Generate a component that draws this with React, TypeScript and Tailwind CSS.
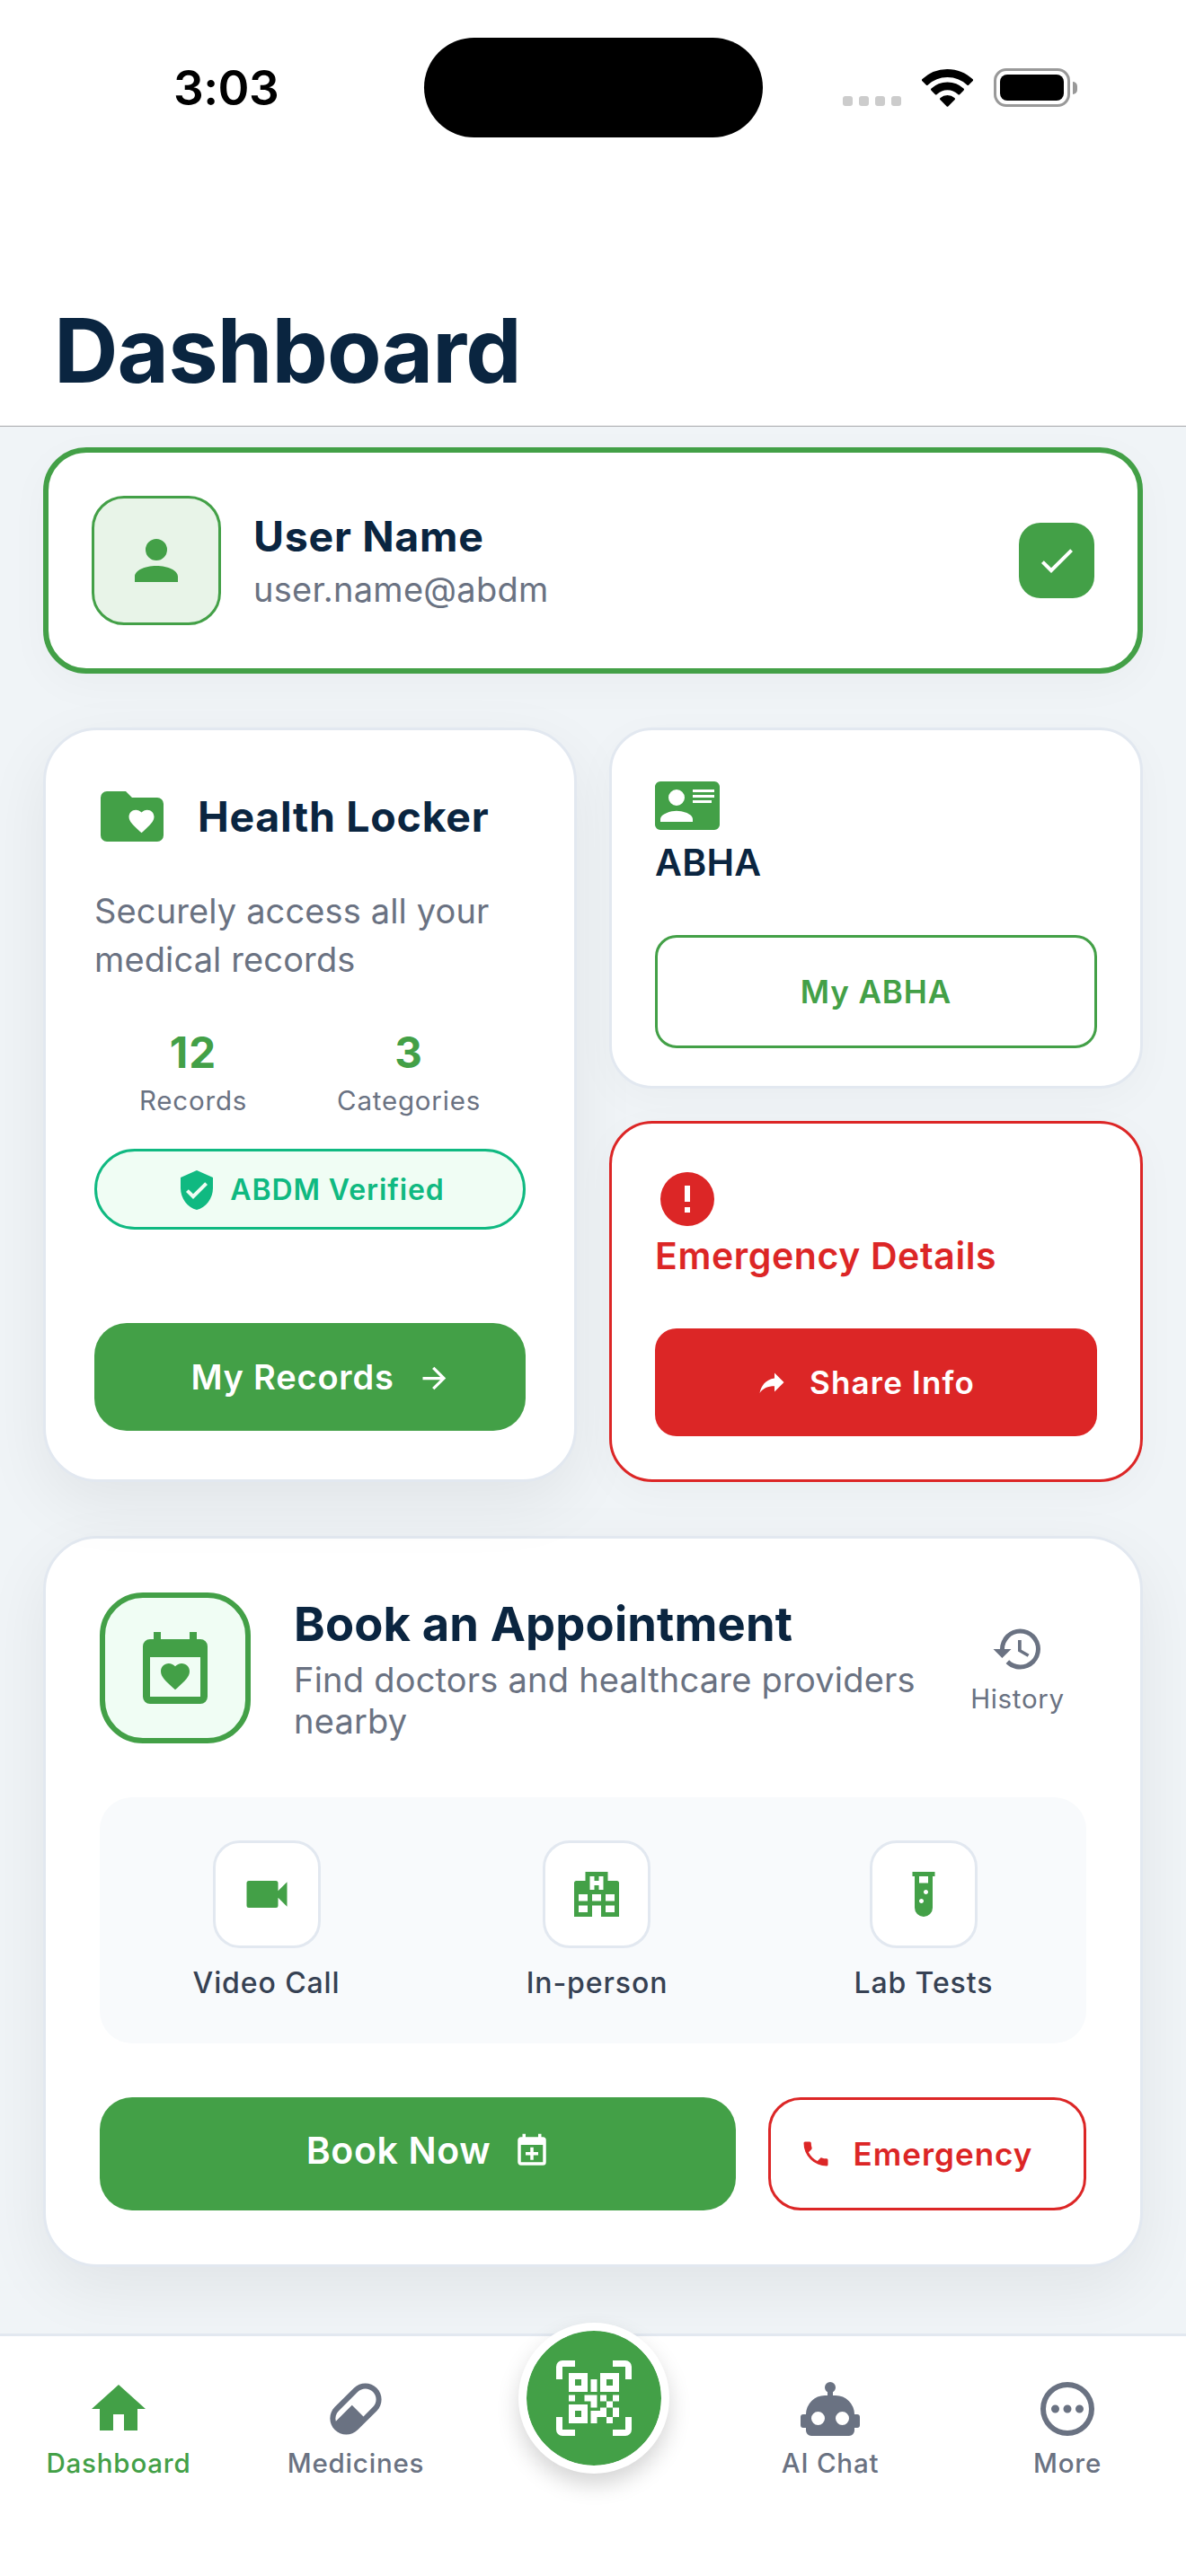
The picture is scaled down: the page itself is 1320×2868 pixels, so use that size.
import type { ReactNode } from "react";

const PATHS = {
  account:
    "M12 4A4 4 0 0 1 16 8A4 4 0 0 1 12 12A4 4 0 0 1 8 8A4 4 0 0 1 12 4M12 14C16.42 14 20 15.79 20 18V20H4V18C4 15.79 7.58 14 12 14Z",
  check: "M21 7L9 19L3.5 13.5L4.91 12.09L9 16.17L19.59 5.59L21 7Z",
  card:
    "M2 3H22C23.05 3 24 3.95 24 5V19C24 20.05 23.05 21 22 21H2C.95 21 0 20.05 0 19V5C0 3.95 .95 3 2 3M14 6V7H22V6H14M14 8V9H22V8H14M14 10V11H21V10H14M8 13.91C6 13.91 2 15 2 17V18H14V17C14 15 10 13.91 8 13.91M8 6A3 3 0 0 0 5 9A3 3 0 0 0 8 12A3 3 0 0 0 11 9A3 3 0 0 0 8 6Z",
  alert:
    "M13 13H11V7H13M13 17H11V15H13M12 2A10 10 0 0 0 2 12A10 10 0 0 0 12 22A10 10 0 0 0 22 12A10 10 0 0 0 12 2Z",
  share: "M21 12L14 5V9C7 10 4 15 3 20C5.5 16.5 9 14.9 14 14.9V19L21 12Z",
  arrow:
    "M4 11V13H16L10.5 18.5L11.92 19.92L19.84 12L11.92 4.08L10.5 5.5L16 11H4Z",
  shield:
    "M10 17L6 13L7.41 11.59L10 14.17L16.59 7.58L18 9M12 1L3 5V11C3 16.55 6.84 21.74 12 23C17.16 21.74 21 16.55 21 11V5L12 1Z",
  history:
    "M13.5 8H12V13L16.28 15.54L17 14.33L13.5 12.25V8M13 3A9 9 0 0 0 4 12H1L4.96 16.03L9 12H6A7 7 0 0 1 13 5A7 7 0 0 1 20 12A7 7 0 0 1 13 19C11.07 19 9.32 18.21 8.06 16.94L6.64 18.36C8.27 20 10.5 21 13 21A9 9 0 0 0 22 12A9 9 0 0 0 13 3",
  video:
    "M17 10.5V7A1 1 0 0 0 16 6H4A1 1 0 0 0 3 7V17A1 1 0 0 0 4 18H16A1 1 0 0 0 17 17V13.5L21 17.5V6.5L17 10.5Z",
  hospital:
    "M2 22V7A1 1 0 0 1 3 6H7V2H17V6H21A1 1 0 0 1 22 7V22H14V17H10V22H2M9 4V10H11V8H13V10H15V4H13V6H11V4H9M4 20H8V17H4V20M4 15H8V12H4V15M16 20H20V17H16V20M16 15H20V12H16V15M10 15H14V12H10V15Z",
  tube:
    "M7 2V4H8V18A4 4 0 0 0 12 22A4 4 0 0 0 16 18V4H17V2H7M11 16C10.4 16 10 15.6 10 15C10 14.4 10.4 14 11 14C11.6 14 12 14.4 12 15C12 15.6 11.6 16 11 16M13 12C12.4 12 12 11.6 12 11C12 10.4 12.4 10 13 10C13.6 10 14 10.4 14 11C14 11.6 13.6 12 13 12M14 7H10V4H14V7Z",
  calendarPlus:
    "M19 19V8H5V19H19M16 1H18V3H19A2 2 0 0 1 21 5V19A2 2 0 0 1 19 21H5C3.89 21 3 20.1 3 19V5C3 3.89 3.89 3 5 3H6V1H8V3H16V1M11 9.5H13V12.5H16V14.5H13V17.5H11V14.5H8V12.5H11V9.5Z",
  phone:
    "M6.62 10.79C8.06 13.62 10.38 15.94 13.21 17.38L15.41 15.18C15.69 14.9 16.08 14.82 16.43 14.93C17.55 15.3 18.75 15.5 20 15.5A1 1 0 0 1 21 16.5V20A1 1 0 0 1 20 21A17 17 0 0 1 3 4A1 1 0 0 1 4 3H7.5A1 1 0 0 1 8.5 4C8.5 5.25 8.7 6.45 9.07 7.57C9.18 7.92 9.1 8.31 8.82 8.59L6.62 10.79Z",
  home: "M10 20V14H14V20H19V12H22L12 3L2 12H5V20H10Z",
  pill:
    "M4.22 11.29L11.29 4.22C13.64 1.88 17.43 1.88 19.78 4.22C22.12 6.56 22.12 10.36 19.78 12.71L12.71 19.78C10.36 22.12 6.56 22.12 4.22 19.78C1.88 17.43 1.88 13.64 4.22 11.29M5.64 12.71C4.59 13.75 4.24 15.24 4.6 16.57L10.59 10.59L14.83 14.83L18.36 11.29C19.93 9.73 19.93 7.2 18.36 5.64C16.8 4.07 14.27 4.07 12.71 5.64L5.64 12.71Z",
  robot:
    "M12 2A2 2 0 0 1 14 4C14 4.74 13.6 5.39 13 5.73V7H14A7 7 0 0 1 21 14H22A1 1 0 0 1 23 15V18A1 1 0 0 1 22 19H21V20A2 2 0 0 1 19 22H5A2 2 0 0 1 3 20V19H2A1 1 0 0 1 1 18V15A1 1 0 0 1 2 14H3A7 7 0 0 1 10 7H11V5.73C10.4 5.39 10 4.74 10 4A2 2 0 0 1 12 2M7.5 13A2.5 2.5 0 0 0 5 15.5A2.5 2.5 0 0 0 7.5 18A2.5 2.5 0 0 0 10 15.5A2.5 2.5 0 0 0 7.5 13M16.5 13A2.5 2.5 0 0 0 14 15.5A2.5 2.5 0 0 0 16.5 18A2.5 2.5 0 0 0 19 15.5A2.5 2.5 0 0 0 16.5 13Z",
  dots:
    "M12 2A10 10 0 0 0 2 12A10 10 0 0 0 12 22A10 10 0 0 0 22 12A10 10 0 0 0 12 2M12 4A8 8 0 0 1 20 12A8 8 0 0 1 12 20A8 8 0 0 1 4 12A8 8 0 0 1 12 4M7.5 10.5A1.5 1.5 0 0 0 6 12A1.5 1.5 0 0 0 7.5 13.5A1.5 1.5 0 0 0 9 12A1.5 1.5 0 0 0 7.5 10.5M12 10.5A1.5 1.5 0 0 0 10.5 12A1.5 1.5 0 0 0 12 13.5A1.5 1.5 0 0 0 13.5 12A1.5 1.5 0 0 0 12 10.5M16.5 10.5A1.5 1.5 0 0 0 15 12A1.5 1.5 0 0 0 16.5 13.5A1.5 1.5 0 0 0 18 12A1.5 1.5 0 0 0 16.5 10.5Z",
  qr:
    "M4 4H10V10H4V4M20 4V10H14V4H20M14 15H16V13H14V11H16V13H18V11H20V13H18V15H20V18H18V20H16V18H13V20H11V16H14V15M16 15V18H18V15H16M4 20V14H10V20H4M6 6V8H8V6H6M16 6V8H18V6H16M6 16V18H8V16H6M4 11H6V13H4V11M9 11H13V15H11V13H9V11M11 6H13V10H11V6M2 2V6H0V2A2 2 0 0 1 2 0H6V2H2M22 0A2 2 0 0 1 24 2V6H22V2H18V0H22M2 18V22H6V24H2A2 2 0 0 1 0 22V18H2M22 22V18H24V22A2 2 0 0 1 22 24H18V22H22Z",
};

const HEART =
  "M12 21.35L10.55 20.03C5.4 15.36 2 12.27 2 8.5C2 5.41 4.42 3 7.5 3C9.24 3 10.91 3.81 12 5.08C13.09 3.81 14.76 3 16.5 3C19.58 3 22 5.41 22 8.5C22 12.27 18.6 15.36 13.45 20.03L12 21.35Z";

function Icon({ name, className }: { name: keyof typeof PATHS; className: string }) {
  return (
    <svg viewBox="0 0 24 24" fill="currentColor" fillRule="evenodd" className={`shrink-0 ${className}`}>
      <path d={PATHS[name]} />
    </svg>
  );
}

function FolderHeart() {
  return (
    <svg viewBox="0 0 24 24" className="size-[84px] shrink-0">
      <path
        fill="#43a047"
        d="M20 6H12L10 4H4A2 2 0 0 0 2 6V18A2 2 0 0 0 4 20H20A2 2 0 0 0 22 18V8A2 2 0 0 0 20 6Z"
      />
      <path fill="#fff" transform="translate(10.2 8.7) scale(.4)" d={HEART} />
    </svg>
  );
}

function CalendarHeart() {
  return (
    <svg viewBox="0 0 24 24" fill="#43a047" fillRule="evenodd" className="size-24 shrink-0">
      <path d="M19 20V9H5V20H19M16 2H18V4H19A2 2 0 0 1 21 6V20A2 2 0 0 1 19 22H5A2 2 0 0 1 3 20V6A2 2 0 0 1 5 4H6V2H8V4H16V2Z" />
      <path transform="translate(7.2 9.55) scale(.4)" d={HEART} />
    </svg>
  );
}

function StatusBar() {
  return (
    <div className="flex h-[195px] items-center pl-[193px] pr-[121px]">
      <span className="w-[279px] text-[53px] leading-[60px] font-semibold tracking-[-0.5px] text-black">3:03</span>
      <div className="-mt-px h-[111px] w-[377px] rounded-full bg-black" />
      <div className="ml-auto flex items-center">
        <div className="mt-[30px] mr-[23px] flex gap-[7px]">
          {[0, 1, 2, 3].map((i) => (
            <span key={i} className="h-[11px] w-[11px] rounded-[3px] bg-[#cccccc]" />
          ))}
        </div>
        <svg viewBox="0 0 57 42" className="mr-[23px] h-[42px] w-[57px]">
          <path d="M28.5 0C39.4 0 49.3 4.2 56.5 11.1a1.5 1.5 0 0 1 0 2.2l-4.2 4.2a1.5 1.5 0 0 1-2.1 0A31.5 31.5 0 0 0 28.5 9 31.5 31.5 0 0 0 6.8 17.5a1.5 1.5 0 0 1-2.1 0L.5 13.3a1.5 1.5 0 0 1 0-2.2A40.5 40.5 0 0 1 28.5 0Z" />
          <path d="M28.5 14.5a26 26 0 0 1 18 7.1 1.5 1.5 0 0 1 0 2.2l-4.2 4.2a1.5 1.5 0 0 1-2.1 0 17 17 0 0 0-23.4 0 1.5 1.5 0 0 1-2.1 0l-4.2-4.2a1.5 1.5 0 0 1 0-2.2 26 26 0 0 1 18-7.1Z" />
          <path d="M28.5 29a11.5 11.5 0 0 1 7.9 3.1 1.4 1.4 0 0 1 0 2.1l-6.9 7a1.4 1.4 0 0 1-2 0l-6.9-7a1.4 1.4 0 0 1 0-2.1A11.5 11.5 0 0 1 28.5 29Z" />
        </svg>
        <div className="flex h-[43px] w-[85px] items-center justify-center rounded-[14px] border-[3px] border-[#999999]">
          <div className="h-[29px] w-[71px] rounded-[8px] bg-black" />
        </div>
        <div className="ml-[3px] h-[14px] w-[5px] rounded-r-full bg-[#999999]" />
      </div>
    </div>
  );
}

function UserCard() {
  return (
    <section className="flex h-[252px] items-center rounded-[48px] border-[6px] border-[#43a047] bg-white px-12 shadow-[0_12px_48px_rgba(0,0,0,0.03)]">
      <div className="flex size-36 items-center justify-center rounded-[36px] border-[3px] border-[#43a047] bg-[#e8f4e8]">
        <Icon name="account" className="size-[72px] text-[#43a047]" />
      </div>
      <div className="ml-[36px] pt-[6px]">
        <h2 className="text-[46.5px] leading-[58px] font-bold tracking-[0.7px] text-[#0a2540]">User Name</h2>
        <p className="text-[38px] leading-[60px] tracking-[0.28px] text-gray-500">user.name@abdm</p>
      </div>
      <div className="ml-auto flex size-[84px] items-center justify-center rounded-[24px] bg-[#43a047]">
        <Icon name="check" className="size-12 text-white" />
      </div>
    </section>
  );
}

function Stat({ value, label }: { value: string; label: string }) {
  return (
    <div className="flex flex-col items-center">
      <span className="text-[47.5px] leading-[57px] font-bold tracking-[1px] text-[#43a047]">{value}</span>
      <span className="text-[29.5px] leading-[50px] tracking-[0.8px] text-gray-500">{label}</span>
    </div>
  );
}

function HealthLocker() {
  return (
    <section className="flex h-[840px] flex-col rounded-[60px] border-[3px] border-slate-200 bg-white p-[54px] shadow-[0_24px_72px_rgba(0,0,0,0.065)]">
      <div className="flex items-center gap-[31px]">
        <FolderHeart />
        <h2 className="text-[46.5px] leading-[60px] font-bold tracking-[0.72px] whitespace-nowrap text-[#0a2540]">Health Locker</h2>
      </div>
      <p className="mt-[36px] text-[38px] leading-[54px] tracking-[0.13px] text-gray-500">Securely access all your medical records</p>
      <div className="mt-12 flex justify-around">
        <Stat value="12" label="Records" />
        <Stat value="3" label="Categories" />
      </div>
      <div className="mt-[29px] flex h-[90px] items-center justify-center gap-[13px] rounded-full border-[3px] border-[#10b981] bg-green-50 pt-px text-[#10b981]">
        <Icon name="shield" className="size-12" />
        <span className="text-[32px] font-[570] tracking-[0.9px]">ABDM Verified</span>
      </div>
      <button className="mt-auto flex h-[120px] items-center justify-center gap-[25px] rounded-[36px] bg-[#43a047] pl-[25px] text-white">
        <span className="text-[38px] font-[570] tracking-[0.8px]">My Records</span>
        <Icon name="arrow" className="mt-[3px] size-[39px]" />
      </button>
    </section>
  );
}

function SideCard({ frame, children }: { frame: string; children: ReactNode }) {
  return (
    <section className={`flex h-[402px] flex-col rounded-[48px] border-[3px] bg-white px-12 pt-12 shadow-[0_12px_48px_rgba(0,0,0,0.03)] ${frame}`}>
      {children}
    </section>
  );
}

function Service({ icon, label }: { icon: keyof typeof PATHS; label: string }) {
  return (
    <div className="flex flex-col items-center">
      <div className="flex size-[120px] items-center justify-center rounded-[30px] border-[3px] border-slate-200 bg-white">
        <Icon name={icon} className="size-[60px] text-[#43a047]" />
      </div>
      <span className="mt-[18px] text-[32px] leading-[42px] font-medium tracking-[0.9px] text-gray-700">{label}</span>
    </div>
  );
}

function Appointment() {
  return (
    <section className="mt-[60px] rounded-[60px] border-[3px] border-slate-200 bg-white p-[60px] shadow-[0_24px_72px_rgba(0,0,0,0.065)]">
      <div className="flex h-[168px] items-center">
        <div className="flex size-[168px] shrink-0 items-center justify-center rounded-[48px] border-[6px] border-[#43a047] bg-green-50">
          <CalendarHeart />
        </div>
        <div className="ml-12 flex-1">
          <h2 className="text-[52.5px] leading-[66px] font-bold tracking-[0.14px] text-[#0a2540]">Book an Appointment</h2>
          <p className="mt-[6px] text-[38px] leading-[46px] tracking-[0.22px] text-gray-500">Find doctors and healthcare providers nearby</p>
        </div>
        <div className="flex w-[153px] flex-col items-center pt-[3px] text-gray-500">
          <Icon name="history" className="size-[60px]" />
          <span className="mt-[4px] text-[29.5px] leading-[42px] tracking-[0.7px]">History</span>
        </div>
      </div>
      <div className="mt-[60px] flex h-[274px] justify-around rounded-[36px] bg-slate-50 pt-12">
        <Service icon="video" label="Video Call" />
        <Service icon="hospital" label="In-person" />
        <Service icon="tube" label="Lab Tests" />
      </div>
      <div className="mt-[60px] flex gap-[36px]">
        <button className="flex h-[126px] w-[708px] items-center justify-center gap-[25px] rounded-[36px] bg-[#43a047] pb-[6px] pl-[24px] text-white">
          <span className="text-[41px] font-[570] tracking-[0.65px]">Book Now</span>
          <Icon name="calendarPlus" className="size-[42px]" />
        </button>
        <button className="flex h-[126px] flex-1 items-center justify-center gap-[24px] rounded-[36px] border-[3px] border-[#dc2626] pr-[25px] text-[#dc2626]">
          <Icon name="phone" className="size-[36px]" />
          <span className="text-[35px] font-[570] tracking-[1px]">Emergency</span>
        </button>
      </div>
    </section>
  );
}

function Tab({ icon, label, active = false }: { icon: keyof typeof PATHS; label: string; active?: boolean }) {
  return (
    <div className={`flex w-[264px] flex-col items-center pt-[45px] ${active ? "text-[#43a047]" : "text-gray-500"}`}>
      <Icon name={icon} className="size-[72px]" />
      <span className="mt-[6px] text-[29.5px] leading-[36px] font-medium tracking-[0.8px]">{label}</span>
    </div>
  );
}

export default function App() {
  return (
    <div className="flex h-[2868px] w-[1320px] flex-col overflow-hidden bg-[#f0f4f7] font-['Inter',sans-serif]">
      <header className="h-[475px] border-b border-[#a7a7aa] bg-white">
        <StatusBar />
        <h1 className="mt-[135px] pl-[60px] text-[99px] leading-[120px] font-bold tracking-[-0.9px] text-[#0a2540]">Dashboard</h1>
      </header>

      <main className="flex-1 px-12 pt-[23px]">
        <UserCard />
        <div className="mt-[60px] grid grid-cols-2 gap-[36px]">
          <HealthLocker />
          <div className="flex flex-col gap-[36px]">
            <SideCard frame="border-slate-200">
              <Icon name="card" className="size-[72px] text-[#43a047]" />
              <h3 className="text-[41px] leading-[54px] font-[570] tracking-[0.3px] text-[#0a2540]">ABHA</h3>
              <button className="mt-[54px] h-[126px] rounded-[24px] border-[3px] border-[#43a047] text-[35px] font-[570] tracking-[0.9px] text-[#43a047]">
                My ABHA
              </button>
            </SideCard>
            <SideCard frame="border-[#dc2626]">
              <Icon name="alert" className="size-[72px] text-[#dc2626]" />
              <h3 className="text-[41px] leading-[54px] font-[570] tracking-[0.6px] text-[#dc2626]">Emergency Details</h3>
              <button className="mt-[54px] flex h-[120px] items-center justify-center gap-[24px] rounded-[24px] bg-[#dc2626] pr-[24px] text-white">
                <Icon name="share" className="size-[36px]" />
                <span className="text-[35px] font-[570] tracking-[1.2px]">Share Info</span>
              </button>
            </SideCard>
          </div>
        </div>
        <Appointment />
      </main>

      <nav className="relative flex h-[270px] shrink-0 border-t-[3px] border-slate-200 bg-white">
        <Tab icon="home" label="Dashboard" active />
        <Tab icon="pill" label="Medicines" />
        <div className="w-[264px]" />
        <Tab icon="robot" label="AI Chat" />
        <Tab icon="dots" label="More" />
        <button className="absolute top-[-15px] left-[577px] flex size-[168px] items-center justify-center rounded-full border-[9px] border-white bg-[#43a047] bg-clip-padding text-white shadow-[0_12px_24px_rgba(0,0,0,0.17)]">
          <Icon name="qr" className="size-[84px]" />
        </button>
      </nav>
    </div>
  );
}
